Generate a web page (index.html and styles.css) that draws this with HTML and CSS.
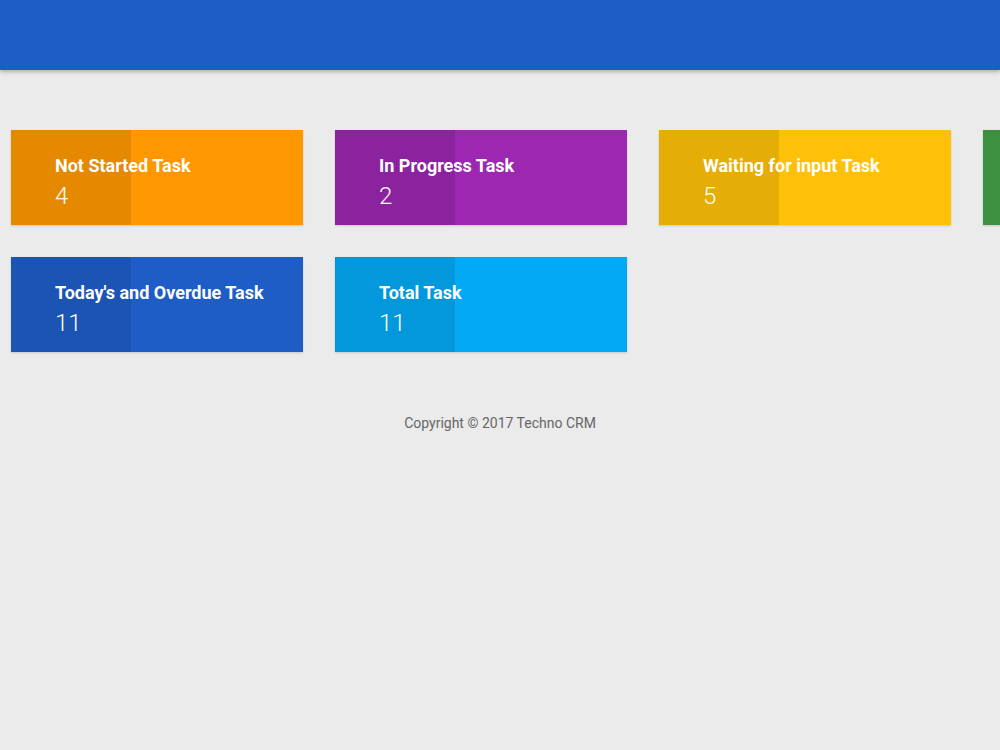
FILE: index.html
```html
<!DOCTYPE html>
<html lang="en">
    <head>
        <meta charset="utf-8">
        <title>Techno CRM - Dashboard</title>
        <link rel="stylesheet" href="styles.css">
    </head>
    <body>
        <div class="navbar"></div>
        <div class="content">
            <div class="row">
                <div class="info-box bg-orange">
                    <div class="text">Not Started Task</div>
                    <div class="number">4</div>
                </div>
                <div class="info-box bg-purple">
                    <div class="text">In Progress Task</div>
                    <div class="number">2</div>
                </div>
                <div class="info-box bg-amber">
                    <div class="text">Waiting for input Task</div>
                    <div class="number">5</div>
                </div>
                <div class="info-box bg-green"></div>
            </div>
            <div class="row">
                <div class="info-box bg-blue">
                    <div class="text">Today's and Overdue Task</div>
                    <div class="number">11</div>
                </div>
                <div class="info-box bg-light-blue">
                    <div class="text">Total Task</div>
                    <div class="number">11</div>
                </div>
            </div>
        </div>
        <div class="footer">Copyright &copy; 2017 Techno CRM</div>
    </body>
</html>
```

FILE: styles.css
```css
body, html{
    margin: 0;
    background-color: #ebebeb;
    font-family: Roboto, "Liberation Sans", sans-serif;
    overflow: hidden;
}
.navbar{
    height: 70px;
    background-color: #1e5dc6;
    box-shadow: 0 2px 4px rgba(0, 0, 0, 0.25);
}
.content{
    padding: 60px 0 0 11px;
}
.row{
    display: flex;
    gap: 32px;
    margin-bottom: 32px;
    width: 1400px;
}
.info-box{
    flex: 0 0 292px;
    height: 95px;
    box-sizing: border-box;
    padding: 25px 0 0 44px;
    color: white;
    box-shadow: 0 1px 2px rgba(0, 0, 0, 0.15);
    background-image: linear-gradient(to right, rgba(0, 0, 0, 0.1) 120px, transparent 120px);
}
.text{
    font-size: 18px;
    font-weight: bold;
    line-height: 22px;
}
.number{
    font-size: 24px;
    font-weight: 300;
    line-height: 32px;
    margin-top: 3px;
}
.bg-orange{
    background-color: #ff9800;
}
.bg-purple{
    background-color: #9c27b0;
}
.bg-amber{
    background-color: #ffc107;
}
.bg-green{
    background-color: #43a047;
}
.bg-blue{
    background-color: #1e5dc6;
}
.bg-light-blue{
    background-color: #03a9f4;
}
.footer{
    text-align: center;
    color: #666;
    font-size: 14px;
    padding-top: 31px;
}
```
